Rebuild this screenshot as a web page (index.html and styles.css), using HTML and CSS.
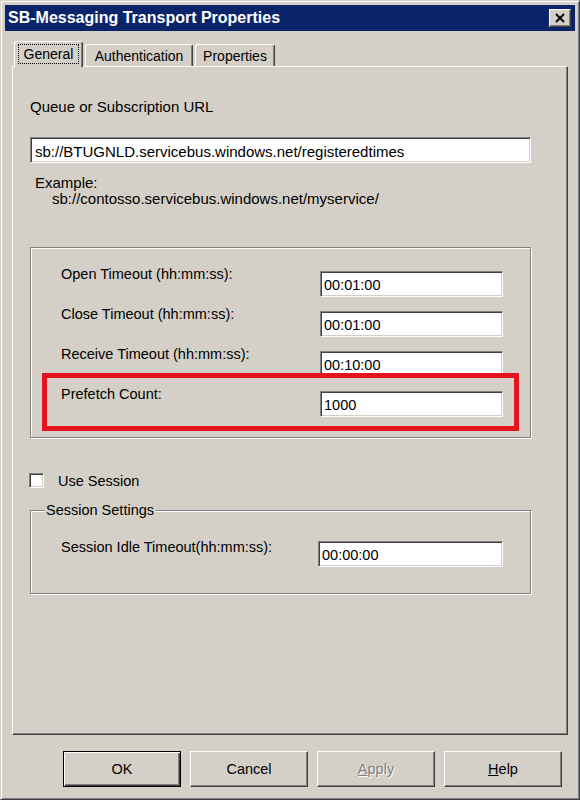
FILE: index.html
```html
<!DOCTYPE html>
<html lang="en">
<head>
    <meta charset="UTF-8">
    <meta name="viewport" content="width=device-width, initial-scale=1.0">
    <title>SB-Messaging Transport Properties</title>
    <link rel="stylesheet" href="styles.css">
</head>
<body>

<div class="window">
    <div class="titlebar">
        <span class="title">SB-Messaging Transport Properties</span>
        <button class="close" aria-label="Close">
            <svg width="20" height="16" viewBox="0 0 20 16">
                <path d="M6 4 L14 12 M14 4 L6 12" stroke="#000" stroke-width="2" fill="none"/>
            </svg>
        </button>
    </div>

    <div class="tabs">
        <div class="tab active"><span class="focus">General</span></div>
        <div class="tab auth">Authentication</div>
        <div class="tab props">Properties</div>
    </div>

    <div class="panel">
        <label class="caption" for="url">Queue or Subscription URL</label>
        <input type="text" id="url" class="field wide" value="sb://BTUGNLD.servicebus.windows.net/registeredtimes">

        <div class="example">
            <div>Example:</div>
            <div class="example-url">sb://contosso.servicebus.windows.net/myservice/</div>
        </div>

        <div class="group timeouts">
            <div class="row">
                <label for="openTimeout">Open Timeout (hh:mm:ss):</label>
                <input type="text" id="openTimeout" class="field" value="00:01:00">
            </div>
            <div class="row">
                <label for="closeTimeout">Close Timeout (hh:mm:ss):</label>
                <input type="text" id="closeTimeout" class="field" value="00:01:00">
            </div>
            <div class="row">
                <label for="receiveTimeout">Receive Timeout (hh:mm:ss):</label>
                <input type="text" id="receiveTimeout" class="field" value="00:10:00">
            </div>
            <div class="row">
                <label for="prefetch">Prefetch Count:</label>
                <input type="text" id="prefetch" class="field" value="1000">
            </div>
            <!-- annotation drawn over the dialog -->
            <div class="highlight"></div>
        </div>

        <div class="check-row">
            <span class="checkbox"></span>
            <span>Use Session</span>
        </div>

        <div class="group session">
            <span class="legend">Session Settings</span>
            <div class="row">
                <label for="idleTimeout">Session Idle Timeout(hh:mm:ss):</label>
                <input type="text" id="idleTimeout" class="field idle" value="00:00:00">
            </div>
        </div>
    </div>

    <div class="buttons">
        <button class="btn default">OK</button>
        <button class="btn">Cancel</button>
        <button class="btn disabled"><u>A</u>pply</button>
        <button class="btn"><u>H</u>elp</button>
    </div>
</div>

</body>
</html>
```

FILE: styles.css
```css
body {
    margin: 0;
    background: #d4d0c8;
    font-family: "Liberation Sans", Arial, sans-serif;
    font-size: 14.5px;
    color: #000;
}
.window {
    width: 580px;
    height: 800px;
    box-sizing: border-box;
    background: #d4d0c8;
    border: 1px solid;
    border-color: #d4d0c8 #404040 #404040 #d4d0c8;
    box-shadow: inset 1px 1px #fff, inset -1px -1px #808080;
    padding: 4px 4px 0 4px;
    display: flex;
    flex-direction: column;
}
.titlebar {
    height: 26px;
    background: #0a246a;
    display: flex;
    align-items: center;
    justify-content: space-between;
    padding: 0 4px 0 3px;
}
.title {
    color: #fff;
    font-weight: bold;
    font-size: 16px;
}
.close {
    width: 22px;
    height: 18px;
    padding: 0;
    background: #d4d0c8;
    border: 1px solid;
    border-color: #fff #404040 #404040 #fff;
    box-shadow: inset -1px -1px #808080;
    display: flex;
}

/* tabs */
.tabs {
    display: flex;
    align-items: flex-end;
    gap: 2px;
    height: 25px;
    margin: 10px 0 0 7px;
    padding-left: 2px;
    font-size: 14px;
}
.tab {
    height: 22px;
    box-sizing: border-box;
    border: 1px solid;
    border-color: #fff #404040 transparent #fff;
    border-bottom: none;
    border-radius: 3px 3px 0 0;
    box-shadow: inset -1px 0 #808080;
    display: flex;
    align-items: center;
    justify-content: center;
    line-height: 16px;
}
.tab.active {
    width: 69px;
    height: 26px;
    margin-bottom: -1px;
    padding-bottom: 2px;
    position: relative;
    z-index: 1;
    background: #d4d0c8;
}
.tab.auth {
    width: 108px;
}
.tab.props {
    width: 80px;
}
.focus {
    border: 1px dotted #000;
    padding: 1px 5px;
}

/* page */
.panel {
    height: 669px;
    box-sizing: border-box;
    margin: 0 7px 0 7px;
    padding: 32px 36px 0 17px;
    border: 1px solid;
    border-color: #fff #404040 #404040 #fff;
    box-shadow: inset -1px -1px #808080;
    display: flex;
    flex-direction: column;
}
.caption {
    line-height: 16px;
    font-size: 15px;
}
.field {
    height: 26px;
    box-sizing: border-box;
    border: 1px solid;
    border-color: #808080 #fff #fff #808080;
    box-shadow: inset 1px 1px #404040, inset -1px -1px #d4d0c8;
    background: #fff;
    font-family: inherit;
    font-size: 14.5px;
    padding: 2px 3px 0 3px;
    margin: 0;
    width: 183px;
    outline: none;
}
.wide {
    width: 100%;
    margin-top: 22px;
    padding-left: 4px;
    font-size: 15px;
}
.example {
    margin: 12px 0 0 5px;
    line-height: 16px;
    font-size: 15px;
}
.example-url {
    padding-left: 17px;
}

.group {
    position: relative;
    border: 1px solid #808080;
    box-shadow: inset 1px 1px #fff, 1px 1px #fff;
    padding-left: 30px;
    padding-right: 27px;
}
.timeouts {
    margin-top: 40px;
    padding-top: 23px;
    padding-bottom: 20px;
    display: flex;
    flex-direction: column;
    gap: 14px;
}
.row {
    display: flex;
    align-items: flex-start;
    justify-content: space-between;
}
.row label {
    line-height: 16px;
    margin-top: -5px;
}
.highlight {
    position: absolute;
    left: 11px;
    top: 125px;
    width: 477px;
    height: 58px;
    box-sizing: border-box;
    border: 5px solid #e3141e;
}

.check-row {
    display: flex;
    align-items: center;
    gap: 14px;
    margin: 35px 0 0 -1px;
    height: 15px;
}
.checkbox {
    width: 15px;
    height: 15px;
    box-sizing: border-box;
    background: #fff;
    border: 1px solid;
    border-color: #808080 #fff #fff #808080;
    box-shadow: inset 1px 1px #404040, inset -1px -1px #d4d0c8;
}

.session {
    margin-top: 22px;
    padding-top: 30px;
    padding-bottom: 26px;
}
.session .row label {
    margin-top: -2px;
}
.idle {
    width: 185px;
}
.legend {
    position: absolute;
    top: -9px;
    left: 13px;
    padding: 0 2px;
    background: #d4d0c8;
    line-height: 16px;
}

/* dialog buttons */
.buttons {
    display: flex;
    justify-content: flex-end;
    gap: 9px;
    margin: 16px 13px 0 0;
}
.btn {
    width: 118px;
    height: 36px;
    box-sizing: border-box;
    background: #d4d0c8;
    font-family: inherit;
    font-size: 14.5px;
    color: #000;
    border: 1px solid;
    border-color: #fff #404040 #404040 #fff;
    box-shadow: inset -1px -1px #808080;
    padding: 0;
}
.btn.default {
    border: 1px solid #000;
    box-shadow: inset 1px 1px #fff, inset -1px -1px #404040, inset -2px -2px #808080;
}
.btn.disabled {
    color: #808080;
    text-shadow: 1px 1px #fff;
}
```
